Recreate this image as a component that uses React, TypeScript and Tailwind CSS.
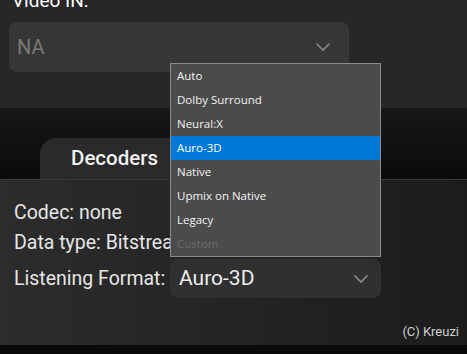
import React from 'react';

const options = ['Auto', 'Dolby Surround', 'Neural:X', 'Auro-3D', 'Native', 'Upmix on Native', 'Legacy', 'Custom'];

function Chevron({ className }: { className?: string }) {
  return (
    <svg width="16" height="10" viewBox="0 0 16 10" className={className}>
      <path d="M1.5 1.5 L8 8 L14.5 1.5" fill="none" stroke="currentColor" strokeWidth="1.6" />
    </svg>
  );
}

export default function App() {
  return (
    <div className="relative w-[467px] h-[354px] overflow-hidden bg-[#0a0a0a] flex flex-col font-['Roboto',sans-serif] text-[#e6e6e6]">
      {/* Video IN section */}
      <div className="h-[108px] shrink-0 bg-[#272727] px-[9px]">
        <p className="mt-[-12px] ml-[3px] text-[19px] leading-[26px] text-white">Video IN:</p>
        <div className="mt-[8px] w-[340px] h-[50px] rounded-lg bg-[#363636] flex items-center justify-between pl-[8px] pr-[18px]">
          <span className="text-[20px] text-[#7a7a7a]">NA</span>
          <Chevron className="text-[#8a8a8a]" />
        </div>
      </div>

      {/* Tabs */}
      <div className="h-[71px] shrink-0 bg-gradient-to-b from-[#171717] to-[#0b0b0b] flex items-end pl-[40px]">
        <div className="w-[180px] h-[41px] rounded-tl-2xl bg-[#2a2a2a] pl-[31px] flex items-center">
          <span className="text-[20.5px] font-medium text-[#f0f0f0]">Decoders</span>
        </div>
      </div>

      {/* Panel */}
      <div className="h-[166px] shrink-0 bg-gradient-to-r from-[#2c2c2c] to-[#1c1c1c] border-t border-[#3a3a3a] px-[14px] pt-[20px] flex flex-col">
        <p className="text-[19.5px] leading-[26px]">Codec: none</p>
        <p className="mt-[4px] text-[19.5px] leading-[26px]">Data type: Bitstream</p>
        <div className="mt-[3px] flex items-center">
          <span className="w-[156px] text-[19.5px] leading-[26px] whitespace-nowrap">Listening Format:</span>
          <div className="w-[211px] h-[39px] rounded-lg bg-[#303030] flex items-center justify-between pl-[9px] pr-[12px]">
            <span className="text-[21px] text-[#ececec]">Auro-3D</span>
            <Chevron className="text-[#8a8a8a]" />
          </div>
        </div>
        <p className="mt-auto mb-[4px] mr-[-6px] self-end text-[13px] text-[#cfcfcf]">(C) Kreuzi</p>
      </div>

      {/* Open dropdown menu */}
      <div className="absolute left-[170px] top-[63px] w-[211px] border border-[#8a8a8a] bg-[#4b4b4b] font-['Open_Sans',sans-serif]">
        {options.map((o) => (
          <div
            key={o}
            className={`h-[24px] flex items-center pl-[6px] text-[11.5px] ${
              o === 'Auro-3D' ? 'bg-[#0078d7] text-white' : o === 'Custom' ? 'text-[#6a6a6a]' : 'text-[#f2f2f2]'
            }`}
          >
            {o}
          </div>
        ))}
      </div>
    </div>
  );
}
